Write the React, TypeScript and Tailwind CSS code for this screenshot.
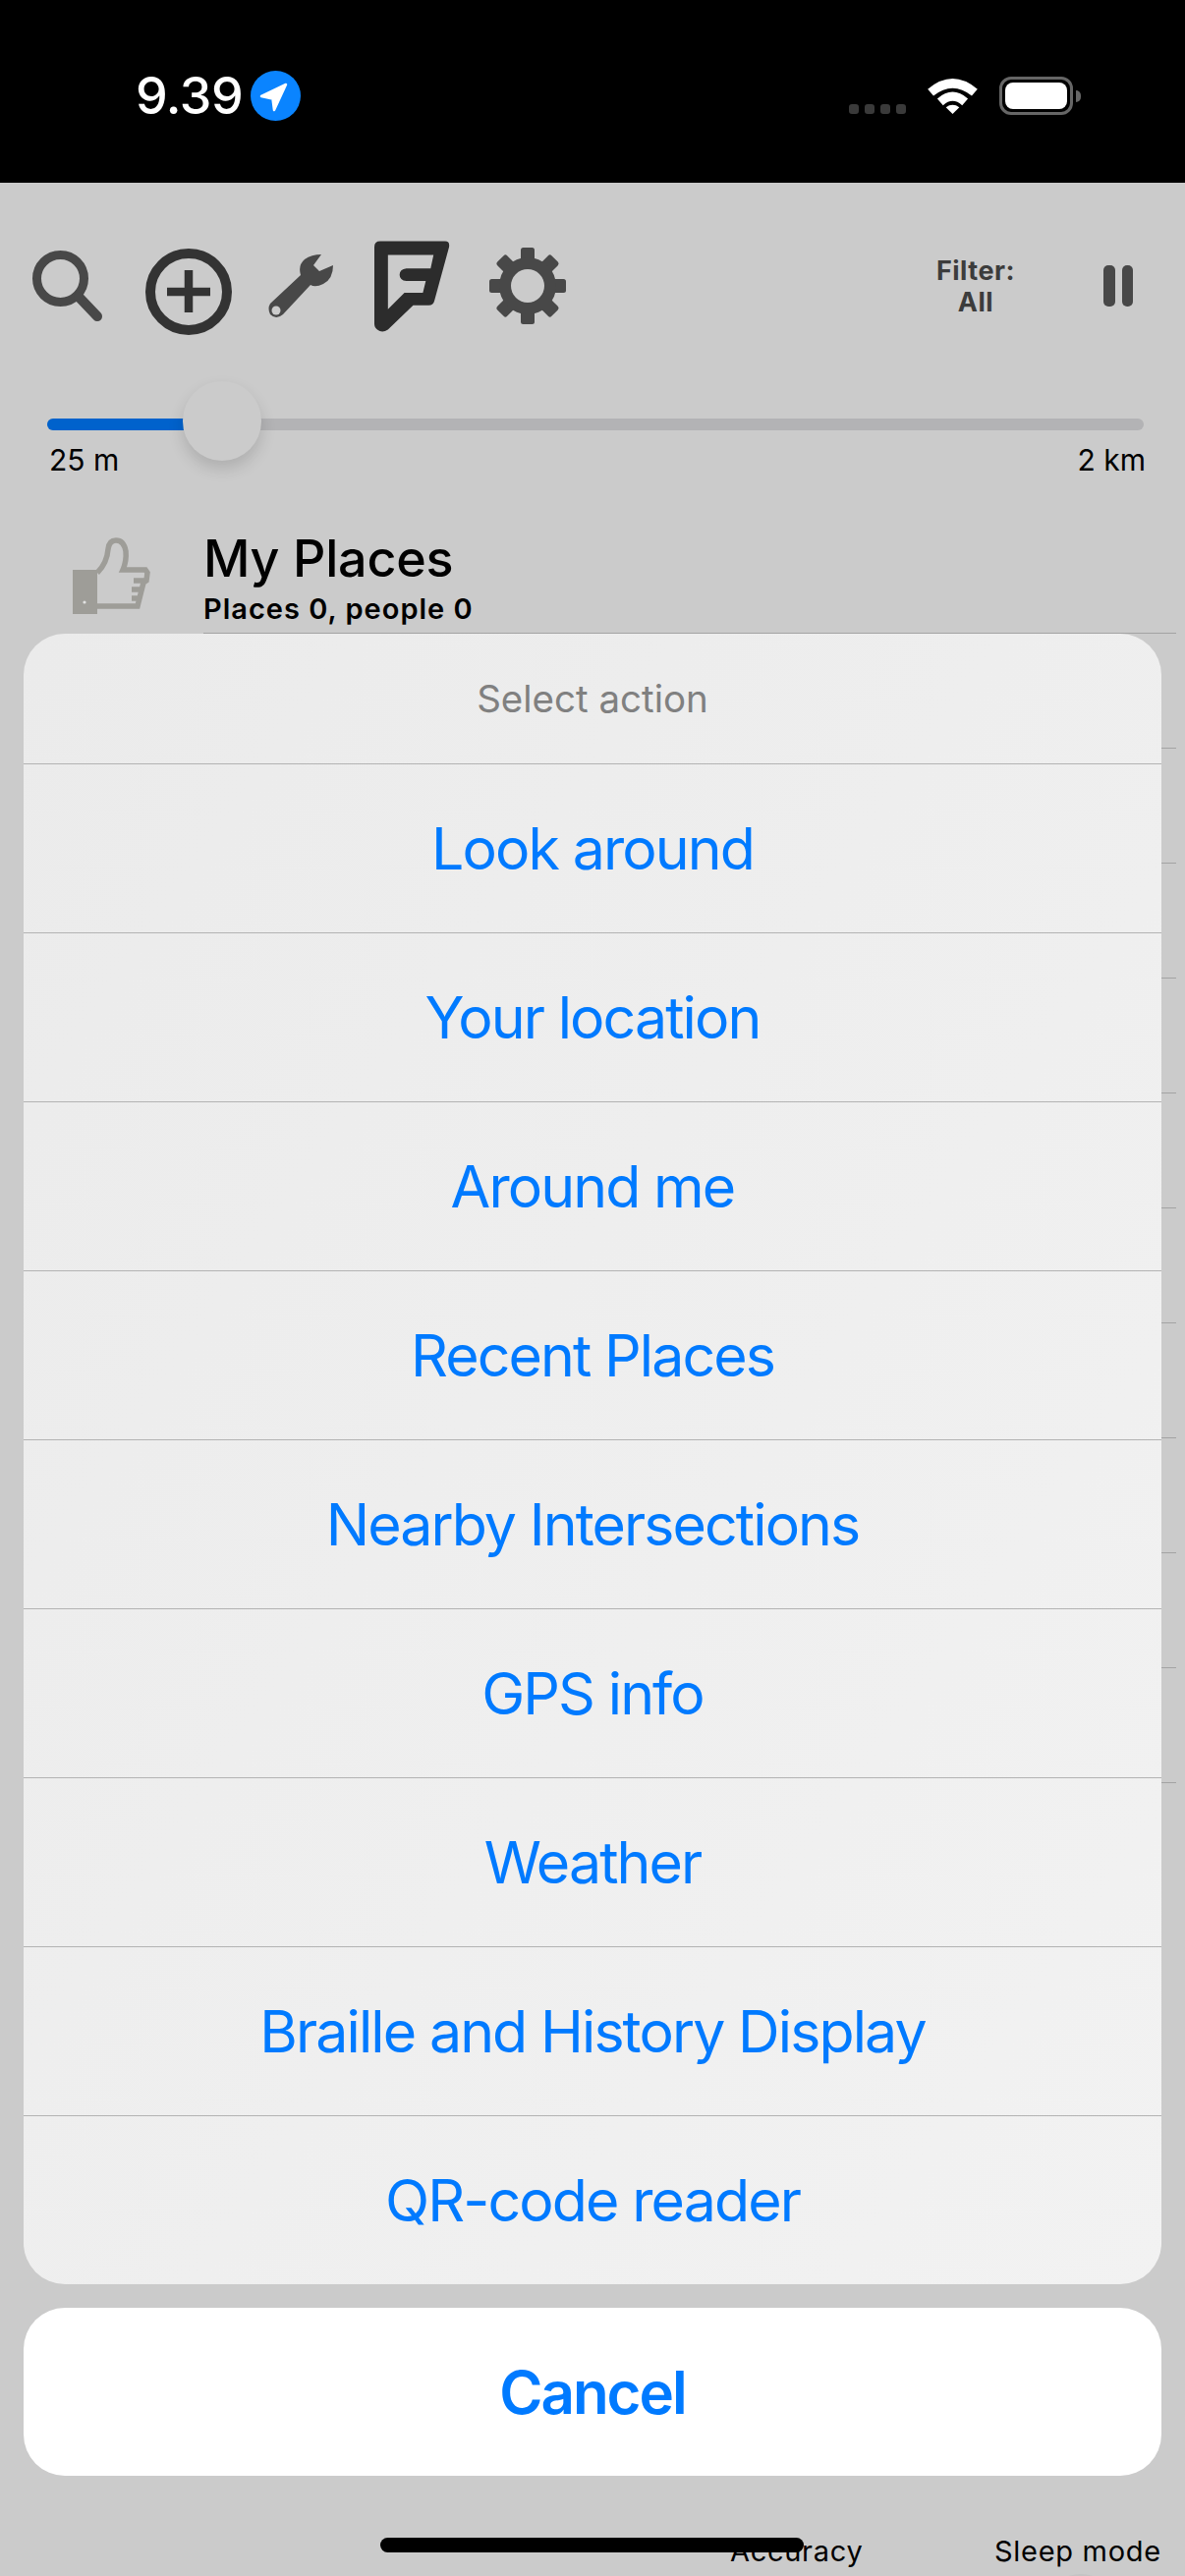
import React from "react";

const FONT = "font-['Inter','Liberation_Sans',sans-serif]";

const actions = [
  "Look around",
  "Your location",
  "Around me",
  "Recent Places",
  "Nearby Intersections",
  "GPS info",
  "Weather",
  "Braille and History Display",
  "QR-code reader",
];

const listRuleOffsets = [761, 878, 995, 1112, 1229, 1346, 1463, 1580, 1697, 1814];

function LocationBadge() {
  return (
    <svg width="51" height="51" viewBox="0 0 51 51" className="ml-[8px]">
      <circle cx="25.5" cy="25.5" r="25.5" fill="#0a84ff" />
      <path d="M11 26 L36 14 L24 40 L22.5 28.5 Z" fill="#fff" stroke="#fff" strokeWidth="2.5" strokeLinejoin="round" />
    </svg>
  );
}

function StatusIcons() {
  return (
    <div className="flex items-start">
      <div className="flex gap-[6px] mt-[28px]">
        {[0, 1, 2, 3].map((d) => (
          <span key={d} className="w-[10px] h-[10px] rounded-[3px] bg-[#3a3a3a]" />
        ))}
      </div>
      <svg width="51" height="37" viewBox="0 0 52 38" className="ml-[22px] mt-[1px]">
        <path d="M0 12 Q26 -10 52 12 L46 19 Q26 3 6 19 Z" fill="#fff" />
        <path d="M10 22 Q26 8 42 22 L36 29 Q26 20 16 29 Z" fill="#fff" />
        <path d="M19 31 Q26 26 33 31 L26 38 Z" fill="#fff" />
      </svg>
      <div className="ml-[22px] w-[75px] h-[39px] rounded-[12px] border-[3px] border-[#666] p-[3px]">
        <div className="w-full h-full rounded-[8px] bg-white" />
      </div>
      <span className="ml-[3px] mt-[14px] w-[5px] h-[12px] rounded-r-full bg-[#666]" />
    </div>
  );
}

function Toolbar() {
  return (
    <div className="flex items-center h-[126px] mt-[42px] pl-[33px] pr-[53px]">
      <svg width="72" height="72" viewBox="0 0 72 72">
        <circle cx="28.5" cy="28.5" r="24" fill="none" stroke="#484848" strokeWidth="9" />
        <path d="M47 47 L66 67" stroke="#484848" strokeWidth="10" strokeLinecap="round" />
      </svg>
      <svg width="88" height="88" viewBox="0 0 88 88" className="ml-[43px] mt-[12px]">
        <circle cx="44" cy="44" r="39" fill="none" stroke="#333" strokeWidth="10" />
        <path d="M44 22 V65 M22 44 H66" stroke="#333" strokeWidth="8.5" />
      </svg>
      <svg width="66" height="66" viewBox="0 0 66 66" className="ml-[37px]">
        <path
          d="M54 1 L46 12 L52 18 L66 12 Q66 26 56 31 Q48 35 43 32 L15 62 Q8 68 2 62 Q-1 56 2 51 L33 22 Q30 12 37 6 Q44 1 54 1 Z"
          fill="#484848"
        />
        <circle cx="8" cy="58" r="4.5" fill="#cbcbcb" />
      </svg>
      <svg width="77" height="93" viewBox="0 0 78 93" className="ml-[42px]">
        <path
          d="M6 0 H73 Q78 0 77 6 L62 61 Q61 66 56 66 H40 L14 91 Q8 95 3 91 Q0 89 0 85 V6 Q0 0 6 0 Z M14 14 V70 L31 53 H50 L53 41 H33 Q26 40 26 34.5 Q26 29 33 28 H58 L61 14 Z"
          fill="#2c2c2c"
          fillRule="evenodd"
        />
      </svg>
      <svg width="78" height="78" viewBox="0 0 78 78" className="ml-[40px]">
        {[0, 45, 90, 135, 180, 225, 270, 315].map((a) => (
          <rect key={a} x="32" y="0" width="14" height="22" rx="2.5" fill="#484848" transform={`rotate(${a} 39 39)`} />
        ))}
        <circle cx="39" cy="39" r="29" fill="#484848" />
        <circle cx="39" cy="39" r="17" fill="#cbcbcb" />
      </svg>
      <div className="ml-auto mr-[90px] mt-[2px] text-center text-[27px] leading-[32px] font-bold text-[#3c3c3c] tracking-[0.5px]">
        Filter:
        <br />
        All
      </div>
      <div className="flex gap-[7px]">
        <span className="w-[11.5px] h-[42px] rounded-[5px] bg-[#484848]" />
        <span className="w-[11.5px] h-[42px] rounded-[5px] bg-[#484848]" />
      </div>
    </div>
  );
}

function RangeSlider() {
  return (
    <div className="pl-[48px] pr-[42px] mt-[72px]">
      <div className="relative h-[12px] rounded-full bg-[#b3b3b5]">
        <div className="h-full w-[145px] rounded-l-full bg-[#0062cc]" />
        <span className="absolute left-[138px] top-[-38px] w-[80px] h-[81px] rounded-full bg-[#cbcbcb] shadow-[0_8px_16px_rgba(0,0,0,0.14)]" />
      </div>
      <div className="flex justify-between mt-[13px] ml-[2px] mr-[-2px] text-[30px] leading-[34px] text-black">
        <span>25 m</span>
        <span>2 km</span>
      </div>
    </div>
  );
}

function PlacesRow() {
  return (
    <div className="flex mt-[54px] pl-[74px]">
      <svg width="79" height="78" viewBox="0 0 79 78" className="mt-[8px]">
        <path d="M0 33 H25 V78 H0 Z" fill="#9e9d98" />
        <circle cx="12" cy="66" r="1.6" fill="#e2e2e2" />
        <path
          d="M25 36 Q35 26 36 12 Q37 3 44 3 Q52 3 54 14 Q55 24 51 33 H74 L76 36 L75 44 L72 46 L66 70 H25 M62 44 H73 M60 53 H71 M60 62 H69"
          fill="none"
          stroke="#9e9d98"
          strokeWidth="5.5"
        />
      </svg>
      <div className="ml-[54px] flex-1 mr-[9px] h-[106px] border-b border-[#a3a3a3]">
        <div className="text-[52px] leading-[60px] font-medium text-black tracking-[-0.2px]">My Places</div>
        <div className="mt-[5px] text-[29px] leading-[32px] font-semibold text-black tracking-[1px]">Places 0, people 0</div>
      </div>
    </div>
  );
}

function ActionSheet() {
  return (
    <div className={`absolute left-[24px] top-[645px] w-[1158px] ${FONT}`}>
      <div className="rounded-[42px] overflow-hidden bg-gradient-to-br from-[#ebebeb] to-[#f2f2f2]">
        <div className="h-[132px] pt-[2px] flex items-center justify-center text-[38.5px] text-[#808080]">Select action</div>
        {actions.map((label) => (
          <div
            key={label}
            className="h-[172px] pt-[1px] box-border border-t border-[#b3b3b3] flex items-center justify-center text-[59px] tracking-[-1.9px] text-[#007aff]"
          >
            {label}
          </div>
        ))}
      </div>
      <div className="mt-[24px] h-[171px] rounded-[42px] bg-white flex items-center justify-center text-[60px] tracking-[-2px] font-semibold text-[#007aff]">
        Cancel
      </div>
    </div>
  );
}

export default function App() {
  return (
    <div className={`relative w-[1206px] h-[2622px] overflow-hidden bg-[#cbcbcb] ${FONT}`}>
      <header className="h-[186px] bg-black flex items-start justify-between pt-[72px] pl-[138px] pr-[106px]">
        <div className="flex items-center h-[51px]">
          <span className="text-[52px] font-medium text-white leading-none tracking-[-0.5px]">9.39</span>
          <LocationBadge />
        </div>
        <div className="pt-[6px]">
          <StatusIcons />
        </div>
      </header>

      <Toolbar />
      <RangeSlider />
      <PlacesRow />

      {/* List separators that show in the gutter beside the sheet */}
      {listRuleOffsets.map((y) => (
        <div key={y} className="absolute left-[1182px] w-[15px] h-[1px] bg-[#a3a3a3]" style={{ top: y }} />
      ))}

      <div className="absolute left-[743px] top-[2579px] text-[29px] leading-[36px] tracking-[0.7px] text-black">Accuracy</div>
      <div className="absolute left-[1012px] top-[2579px] text-[29px] leading-[36px] tracking-[0.7px] text-black">Sleep mode</div>
      <div className="absolute left-[1060px] top-[2620px] w-[80px] h-[80px] rounded-full bg-[#c4c4c4]" />

      <ActionSheet />

      <div className="absolute left-[387px] top-[2583px] w-[431px] h-[15px] rounded-full bg-black" />
    </div>
  );
}
